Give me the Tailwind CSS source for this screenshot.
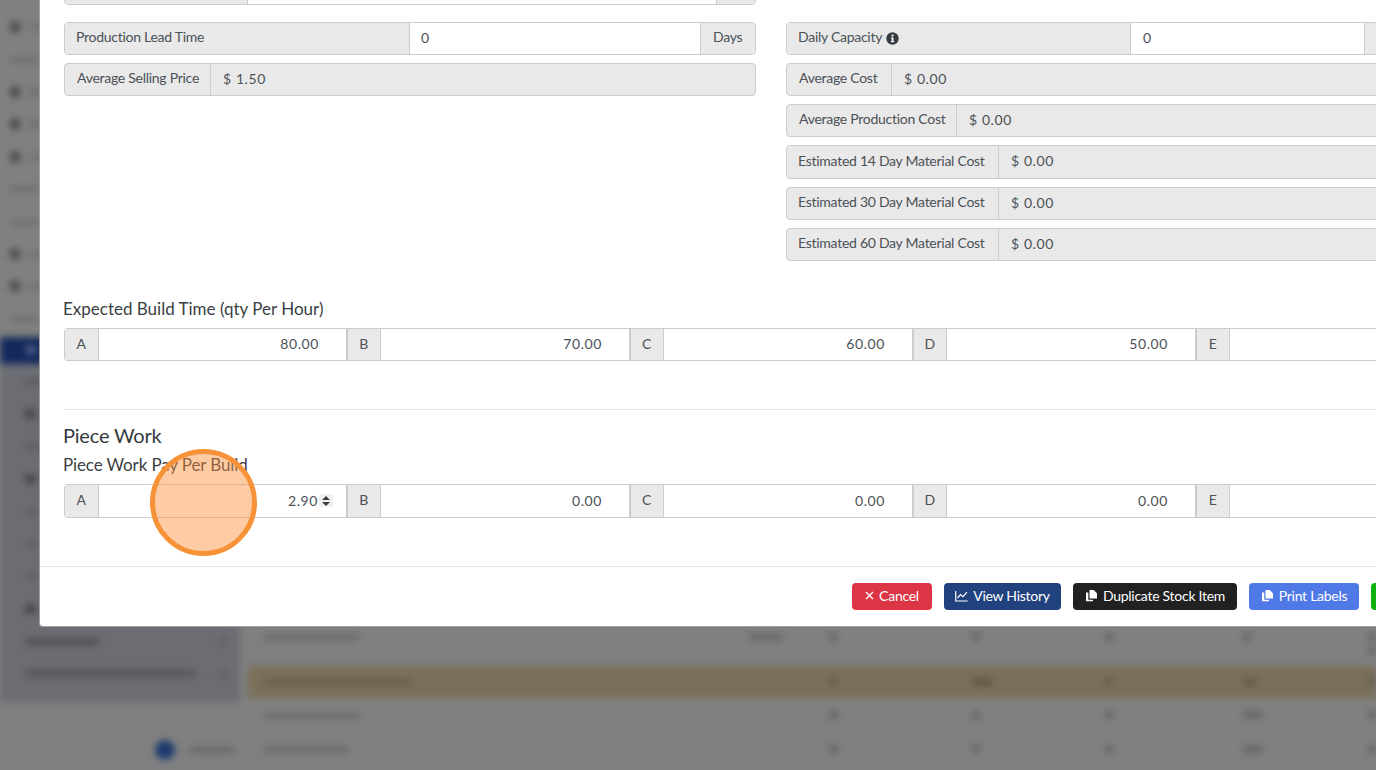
<!DOCTYPE html>
<html lang="en">
<head>
  <meta charset="UTF-8" />
  <title>Stock Item</title>
  <script src="https://cdn.jsdelivr.net/npm/@tailwindcss/browser@4"></script>
</head>
<body class="bg-[#808080]">
<div class="relative w-[1376px] h-[770px] overflow-hidden bg-[#808080] font-['Lato',sans-serif] text-[14px] tracking-[-0.27px] text-[#4b5157]">

  <!-- blurred page behind the modal -->
  <div class="flex h-full blur-[3.5px]">
    <div class="w-[240px] flex flex-col">
      <div class="h-[702px] flex flex-col bg-[linear-gradient(#808080_0,#808080_335px,#6b6d72_370px)]">
        <div class="h-[11px]"></div>
        <div class="h-[32.4px] flex items-center gap-2 pl-[10px]"><span class="w-[10px] h-[10px] bg-[#4a4b4e]"></span><span class="w-[20px] h-[4px] bg-[#68686a]"></span></div>
        <div class="h-[32.4px] flex items-center gap-2 pl-[10px]"><span class="w-[28px] h-[4px] bg-[#68686a]"></span></div>
        <div class="h-[32.4px] flex items-center gap-2 pl-[10px]"><span class="w-[10px] h-[10px] bg-[#4a4b4e]"></span><span class="w-[20px] h-[4px] bg-[#68686a]"></span></div>
        <div class="h-[32.4px] flex items-center gap-2 pl-[10px]"><span class="w-[10px] h-[10px] bg-[#4a4b4e]"></span><span class="w-[20px] h-[4px] bg-[#68686a]"></span></div>
        <div class="h-[32.4px] flex items-center gap-2 pl-[10px]"><span class="w-[10px] h-[10px] bg-[#4a4b4e]"></span><span class="w-[20px] h-[4px] bg-[#68686a]"></span></div>
        <div class="h-[32.4px] flex items-center gap-2 pl-[10px]"><span class="w-[28px] h-[4px] bg-[#68686a]"></span></div>
        <div class="h-[32.4px] flex items-center gap-2 pl-[10px]"><span class="w-[28px] h-[4px] bg-[#68686a]"></span></div>
        <div class="h-[32.4px] flex items-center gap-2 pl-[10px]"><span class="w-[10px] h-[10px] bg-[#4a4b4e]"></span><span class="w-[20px] h-[4px] bg-[#68686a]"></span></div>
        <div class="h-[32.4px] flex items-center gap-2 pl-[10px]"><span class="w-[10px] h-[10px] bg-[#4a4b4e]"></span><span class="w-[20px] h-[4px] bg-[#68686a]"></span></div>
        <div class="h-[32.4px] flex items-center gap-2 pl-[10px]"><span class="w-[28px] h-[4px] bg-[#68686a]"></span></div>
        <div class="h-[27px] bg-[#13295c] flex items-center pl-[26px] my-[2px]"><span class="w-[10px] h-[8px] bg-[#53608a]"></span></div>
        <div class="h-[32.4px] flex items-center gap-2 pl-[25px]"><span class="w-[22px] h-[4px] bg-[#55565a]"></span></div>
        <div class="h-[32.4px] flex items-center gap-2 pl-[25px]"><span class="w-[11px] h-[10px] bg-[#48494d]"></span></div>
        <div class="h-[32.4px] flex items-center gap-2 pl-[25px]"><span class="w-[22px] h-[4px] bg-[#55565a]"></span></div>
        <div class="h-[32.4px] flex items-center gap-2 pl-[25px]"><span class="w-[11px] h-[10px] bg-[#48494d]"></span></div>
        <div class="h-[32.4px] flex items-center gap-2 pl-[25px]"><span class="w-[11px] h-[4px] bg-[#55565a]"></span></div>
        <div class="h-[32.4px] flex items-center gap-2 pl-[25px]"><span class="w-[11px] h-[4px] bg-[#55565a]"></span></div>
        <div class="h-[32.4px] flex items-center gap-2 pl-[25px]"><span class="w-[11px] h-[4px] bg-[#55565a]"></span></div>
        <div class="h-[32.4px] flex items-center gap-2 pl-[25px]"><span class="w-[11px] h-[10px] bg-[#48494d]"></span></div>
        <div class="h-[32.4px] flex items-center justify-between pl-[25px] pr-[12px]"><span class="w-[74px] h-[7px] bg-[#505155]"></span><span class="w-[8px] h-[8px] bg-[#626367]"></span></div>
        <div class="h-[32.4px] flex items-center justify-between pl-[25px] pr-[12px]"><span class="w-[170px] h-[7px] bg-[#55565a]"></span><span class="w-[8px] h-[8px] bg-[#626367]"></span></div>
      </div>
      <div class="flex-1 flex items-center justify-end gap-[15px] pr-[6px] pt-[28px]">
        <span class="w-[20px] h-[20px] rounded-full bg-[#1d3a6f]"></span>
        <span class="w-[44px] h-[6px] bg-[#666]"></span>
      </div>
    </div>
    <div class="flex-1 flex flex-col pt-[627px] pl-[8px]">
      <div class="h-[39px] grid grid-cols-[581px_143px_133px_138px_125px_1fr] pt-[6px]">
        <div class="flex pl-[15px]"><span class="w-[96px] h-[5px] mt-[2px] bg-[#666]"></span><span class="ml-[390px] w-[34px] h-[6px] mt-[1px] bg-[#666]"></span></div>
        <div><span class="block w-[8px] h-[8px] bg-[#666]"></span></div>
        <div><span class="block w-[8px] h-[8px] bg-[#666]"></span></div>
        <div><span class="block w-[8px] h-[8px] bg-[#666]"></span></div>
        <div><span class="block w-[8px] h-[8px] bg-[#666]"></span></div>
        <div><span class="block w-[8px] h-[8px] bg-[#666]"></span><span class="block w-[8px] h-[8px] mt-[6px] bg-[#666]"></span></div>
      </div>
      <div class="h-[32px] bg-[#7a6f58] grid grid-cols-[581px_143px_133px_138px_125px_1fr] items-center">
        <div class="pl-[15px]"><span class="block w-[148px] h-[5px] bg-[#655c49]"></span></div>
        <div><span class="block w-[8px] h-[8px] bg-[#655c49]"></span></div>
        <div><span class="block w-[20px] h-[8px] bg-[#5f5747]"></span></div>
        <div><span class="block w-[8px] h-[8px] bg-[#655c49]"></span></div>
        <div><span class="block w-[14px] h-[8px] bg-[#655c49]"></span></div>
        <div><span class="block w-[8px] h-[8px] bg-[#655c49]"></span></div>
      </div>
      <div class="h-[34px] grid grid-cols-[581px_143px_133px_138px_125px_1fr] items-center">
        <div class="pl-[15px]"><span class="block w-[96px] h-[5px] bg-[#666]"></span></div>
        <div><span class="block w-[10px] h-[8px] bg-[#666]"></span></div>
        <div><span class="block w-[8px] h-[8px] bg-[#666]"></span></div>
        <div><span class="block w-[8px] h-[8px] bg-[#666]"></span></div>
        <div><span class="block w-[20px] h-[8px] bg-[#666]"></span></div>
        <div><span class="block w-[8px] h-[8px] bg-[#666]"></span></div>
      </div>
      <div class="h-[34px] grid grid-cols-[581px_143px_133px_138px_125px_1fr] items-center">
        <div class="pl-[15px]"><span class="block w-[86px] h-[5px] bg-[#666]"></span></div>
        <div><span class="block w-[10px] h-[8px] bg-[#666]"></span></div>
        <div><span class="block w-[8px] h-[8px] bg-[#666]"></span></div>
        <div><span class="block w-[8px] h-[8px] bg-[#666]"></span></div>
        <div><span class="block w-[20px] h-[8px] bg-[#666]"></span></div>
        <div><span class="block w-[8px] h-[8px] bg-[#666]"></span></div>
      </div>
    </div>
  </div>

  <!-- modal -->
  <div class="absolute left-[39px] top-[-40px] w-[1463px] h-[667px] flex flex-col bg-white rounded-[4px] border border-[#5f5f5f]/60">
    <div class="flex-1 pl-[24px] pr-[23px] pt-[11px]">
      <div class="grid grid-cols-2 gap-x-[30px] h-[325px]">
        <div>
          <div class="flex h-[33px] mb-[17px] border border-[#ccc] rounded-[4px] overflow-hidden">
            <div class="w-[183px] bg-[#e9e9e9] border-r border-[#ccc]"></div>
            <div class="flex-1 bg-white"></div>
            <div class="w-[39px] bg-[#e9e9e9] border-l border-[#ccc]"></div>
          </div>
          <div class="flex h-[33px] mb-[8px] border border-[#ccc] rounded-[4px] overflow-hidden">
            <div class="w-[345px] bg-[#e9e9e9] border-r border-[#ccc] flex items-center pl-[11px] pb-[4px]">Production Lead Time</div>
            <div class="flex-1 bg-white flex items-center pl-[11px] pb-[3px] tracking-[0.6px]">0</div>
            <div class="w-[55px] bg-[#e9e9e9] border-l border-[#ccc] flex items-center pl-[12px] pb-[4px]">Days</div>
          </div>
          <div class="flex h-[33px] border border-[#ccc] rounded-[4px] overflow-hidden bg-[#e9e9e9]">
            <div class="w-[146px] border-r border-[#ccc] flex items-center pl-[12px] pb-[4px]">Average Selling Price</div>
            <div class="flex-1 flex items-center pl-[12px] pb-[3px] tracking-[0.6px]">$ 1.50</div>
          </div>
        </div>
        <div class="pt-[50px]">
          <div class="flex h-[33px] mb-[8px] border border-[#ccc] rounded-[4px] overflow-hidden">
            <div class="w-[344px] bg-[#e9e9e9] border-r border-[#ccc] flex items-center gap-[4px] pl-[11px] pb-[1px]"><span class="pb-[3px]">Daily Capacity</span>
              <svg class="w-[13px] h-[13px]" viewBox="0 0 13 13"><circle cx="6.5" cy="6.5" r="6.2" fill="#343a40"/><rect x="5.6" y="2.6" width="1.9" height="1.9" fill="#fff"/><path d="M4.9 5.6h2.6v3.6h.8v1H4.8v-1h.8V6.6h-.7z" fill="#fff"/></svg>
            </div>
            <div class="w-[233px] bg-white flex items-center pl-[12px] pb-[3px] tracking-[0.6px]">0</div>
            <div class="flex-1 bg-[#e9e9e9] border-l border-[#ccc]"></div>
          </div>
          <div class="flex h-[33px] mb-[8px] border border-[#ccc] rounded-[4px] overflow-hidden bg-[#e9e9e9]">
            <div class="w-[105px] border-r border-[#ccc] flex items-center pl-[12px] pb-[4px]">Average Cost</div>
            <div class="flex-1 flex items-center pl-[12px] pb-[3px] tracking-[0.6px]">$ 0.00</div>
          </div>
          <div class="flex h-[33px] mb-[8px] border border-[#ccc] rounded-[4px] overflow-hidden bg-[#e9e9e9]">
            <div class="w-[170px] border-r border-[#ccc] flex items-center pl-[12px] pb-[4px]">Average Production Cost</div>
            <div class="flex-1 flex items-center pl-[12px] pb-[3px] tracking-[0.6px]">$ 0.00</div>
          </div>
          <div class="flex h-[34px] mb-[8px] border border-[#ccc] rounded-[4px] overflow-hidden bg-[#e9e9e9]">
            <div class="w-[212px] border-r border-[#ccc] flex items-center pl-[11px] pb-[4px]">Estimated 14 Day Material Cost</div>
            <div class="flex-1 flex items-center pl-[12px] pb-[3px] tracking-[0.6px]">$ 0.00</div>
          </div>
          <div class="flex h-[33px] mb-[8px] border border-[#ccc] rounded-[4px] overflow-hidden bg-[#e9e9e9]">
            <div class="w-[212px] border-r border-[#ccc] flex items-center pl-[11px] pb-[4px]">Estimated 30 Day Material Cost</div>
            <div class="flex-1 flex items-center pl-[12px] pb-[3px] tracking-[0.6px]">$ 0.00</div>
          </div>
          <div class="flex h-[33px] border border-[#ccc] rounded-[4px] overflow-hidden bg-[#e9e9e9]">
            <div class="w-[212px] border-r border-[#ccc] flex items-center pl-[11px] pb-[4px]">Estimated 60 Day Material Cost</div>
            <div class="flex-1 flex items-center pl-[12px] pb-[3px] tracking-[0.6px]">$ 0.00</div>
          </div>
        </div>
      </div>

      <div class="h-[24px] -ml-px flex items-center text-[17px] tracking-normal text-[#3a3f44]">Expected Build Time (qty Per Hour)</div>
      <div class="grid grid-cols-[284px_283px_283px_283px_283px] mt-[7px] tracking-[0.6px]">
        <div class="flex h-[33px] border border-[#ccc] rounded-l-[4px] border-r-[2px]"><span class="w-[34px] bg-[#e9e9e9] border-r border-[#ccc] flex items-center justify-center pb-[2px]">A</span><span class="flex-1 flex items-center justify-end pr-[27px] pb-[2px]">80.00</span></div>
        <div class="flex h-[33px] border border-l-0 border-[#ccc] border-r-[2px]"><span class="w-[33px] bg-[#e9e9e9] border-r border-[#ccc] flex items-center justify-center pb-[2px]">B</span><span class="flex-1 flex items-center justify-end pr-[27px] pb-[2px]">70.00</span></div>
        <div class="flex h-[33px] border border-l-0 border-[#ccc] border-r-[2px]"><span class="w-[33px] bg-[#e9e9e9] border-r border-[#ccc] flex items-center justify-center pb-[2px]">C</span><span class="flex-1 flex items-center justify-end pr-[27px] pb-[2px]">60.00</span></div>
        <div class="flex h-[33px] border border-l-0 border-[#ccc] border-r-[2px]"><span class="w-[33px] bg-[#e9e9e9] border-r border-[#ccc] flex items-center justify-center pb-[2px]">D</span><span class="flex-1 flex items-center justify-end pr-[27px] pb-[2px]">50.00</span></div>
        <div class="flex h-[33px] border border-l-0 border-[#ccc] rounded-r-[4px]"><span class="w-[33px] bg-[#e9e9e9] border-r border-[#ccc] flex items-center justify-center pb-[2px]">E</span><span class="flex-1"></span></div>
      </div>

      <hr class="mt-[48px] border-[#e4e4e4]" />

      <div class="h-[28px] mt-[12px] -ml-px pb-[2px] flex items-center text-[20px] tracking-[-0.2px] text-[#343a40]">Piece Work</div>
      <div class="h-[24px] mt-[3px] -ml-px flex items-center text-[17px] tracking-[-0.12px] text-[#3a3f44]">Piece Work Pay Per Build</div>
      <div class="grid grid-cols-[284px_283px_283px_283px_283px] mt-[7px] tracking-[0.6px]">
        <div class="flex h-[34px] border border-[#ccc] rounded-l-[4px] border-r-[2px]"><span class="w-[34px] bg-[#e9e9e9] border-r border-[#ccc] flex items-center justify-center pb-[3px]">A</span>
          <span class="flex-1 flex items-center justify-end pr-[13px] pb-[1px]"><span class="pb-[1px]">2.90</span>
            <span class="ml-[1px] w-[14px] h-[13px] bg-[#f0f0f0] flex items-center justify-center">
              <svg class="w-[8px] h-[10px]" viewBox="0 0 8 10"><path d="M4 0 8 4H0zM4 10 0 6h8z" fill="#3c3c3c"/></svg>
            </span>
          </span>
        </div>
        <div class="flex h-[34px] border border-l-0 border-[#ccc] border-r-[2px]"><span class="w-[33px] bg-[#e9e9e9] border-r border-[#ccc] flex items-center justify-center pb-[3px]">B</span><span class="flex-1 flex items-center justify-end pr-[27px] pb-[2px]">0.00</span></div>
        <div class="flex h-[34px] border border-l-0 border-[#ccc] border-r-[2px]"><span class="w-[33px] bg-[#e9e9e9] border-r border-[#ccc] flex items-center justify-center pb-[3px]">C</span><span class="flex-1 flex items-center justify-end pr-[27px] pb-[2px]">0.00</span></div>
        <div class="flex h-[34px] border border-l-0 border-[#ccc] border-r-[2px]"><span class="w-[33px] bg-[#e9e9e9] border-r border-[#ccc] flex items-center justify-center pb-[3px]">D</span><span class="flex-1 flex items-center justify-end pr-[27px] pb-[2px]">0.00</span></div>
        <div class="flex h-[34px] border border-l-0 border-[#ccc] rounded-r-[4px]"><span class="w-[33px] bg-[#e9e9e9] border-r border-[#ccc] flex items-center justify-center pb-[3px]">E</span><span class="flex-1"></span></div>
      </div>
    </div>

    <div class="h-[60px] border-t border-[#e4e4e4] flex items-center justify-end gap-[12px] pr-[11px] text-white">
      <button class="h-[27px] w-[80px] rounded-[4px] bg-[#dc3545] flex items-center justify-center gap-[5px] pb-[2px]">
        <svg class="w-[9px] h-[9px]" viewBox="0 0 9 9"><path d="M1 1l7 7M8 1L1 8" stroke="#fff" stroke-width="1.4"/></svg>Cancel</button>
      <button class="h-[27px] w-[117px] rounded-[4px] bg-[#21427f] flex items-center justify-center gap-[5px] pb-[2px]">
        <svg class="w-[13px] h-[12px]" viewBox="0 0 13 12"><path d="M.7 1v10h12" fill="none" stroke="#fff" stroke-width="1.2"/><path d="M2.5 8l3-3.4 2.4 2L12 2.2" fill="none" stroke="#fff" stroke-width="1.2"/></svg>View History</button>
      <button class="h-[27px] w-[164px] rounded-[4px] bg-[#212121] flex items-center justify-center gap-[5px] pb-[2px]">
        <svg class="w-[13px] h-[13px]" viewBox="0 0 13 13"><path d="M4.5 1h4.2L12 4.2V9.6H4.5z" fill="#fff"/><path d="M3.3 3.6H1v8.6h7V10.8H3.3z" fill="#fff"/></svg>Duplicate Stock Item</button>
      <button class="h-[27px] w-[110px] rounded-[4px] bg-[#4f79e6] flex items-center justify-center gap-[5px] pb-[2px]">
        <svg class="w-[13px] h-[13px]" viewBox="0 0 13 13"><path d="M4.5 1h4.2L12 4.2V9.6H4.5z" fill="#fff"/><path d="M3.3 3.6H1v8.6h7V10.8H3.3z" fill="#fff"/></svg>Print Labels</button>
      <button class="h-[27px] w-[119px] rounded-[4px] bg-[#0fb10f]" aria-label="Save"></button>
    </div>
  </div>

  <!-- click marker -->
  <div class="absolute left-[150px] top-[449px] w-[107px] h-[107px] rounded-full border-[5px] border-[#f79239] bg-[#fb8b36]/45"></div>
</div>
</body>
</html>
